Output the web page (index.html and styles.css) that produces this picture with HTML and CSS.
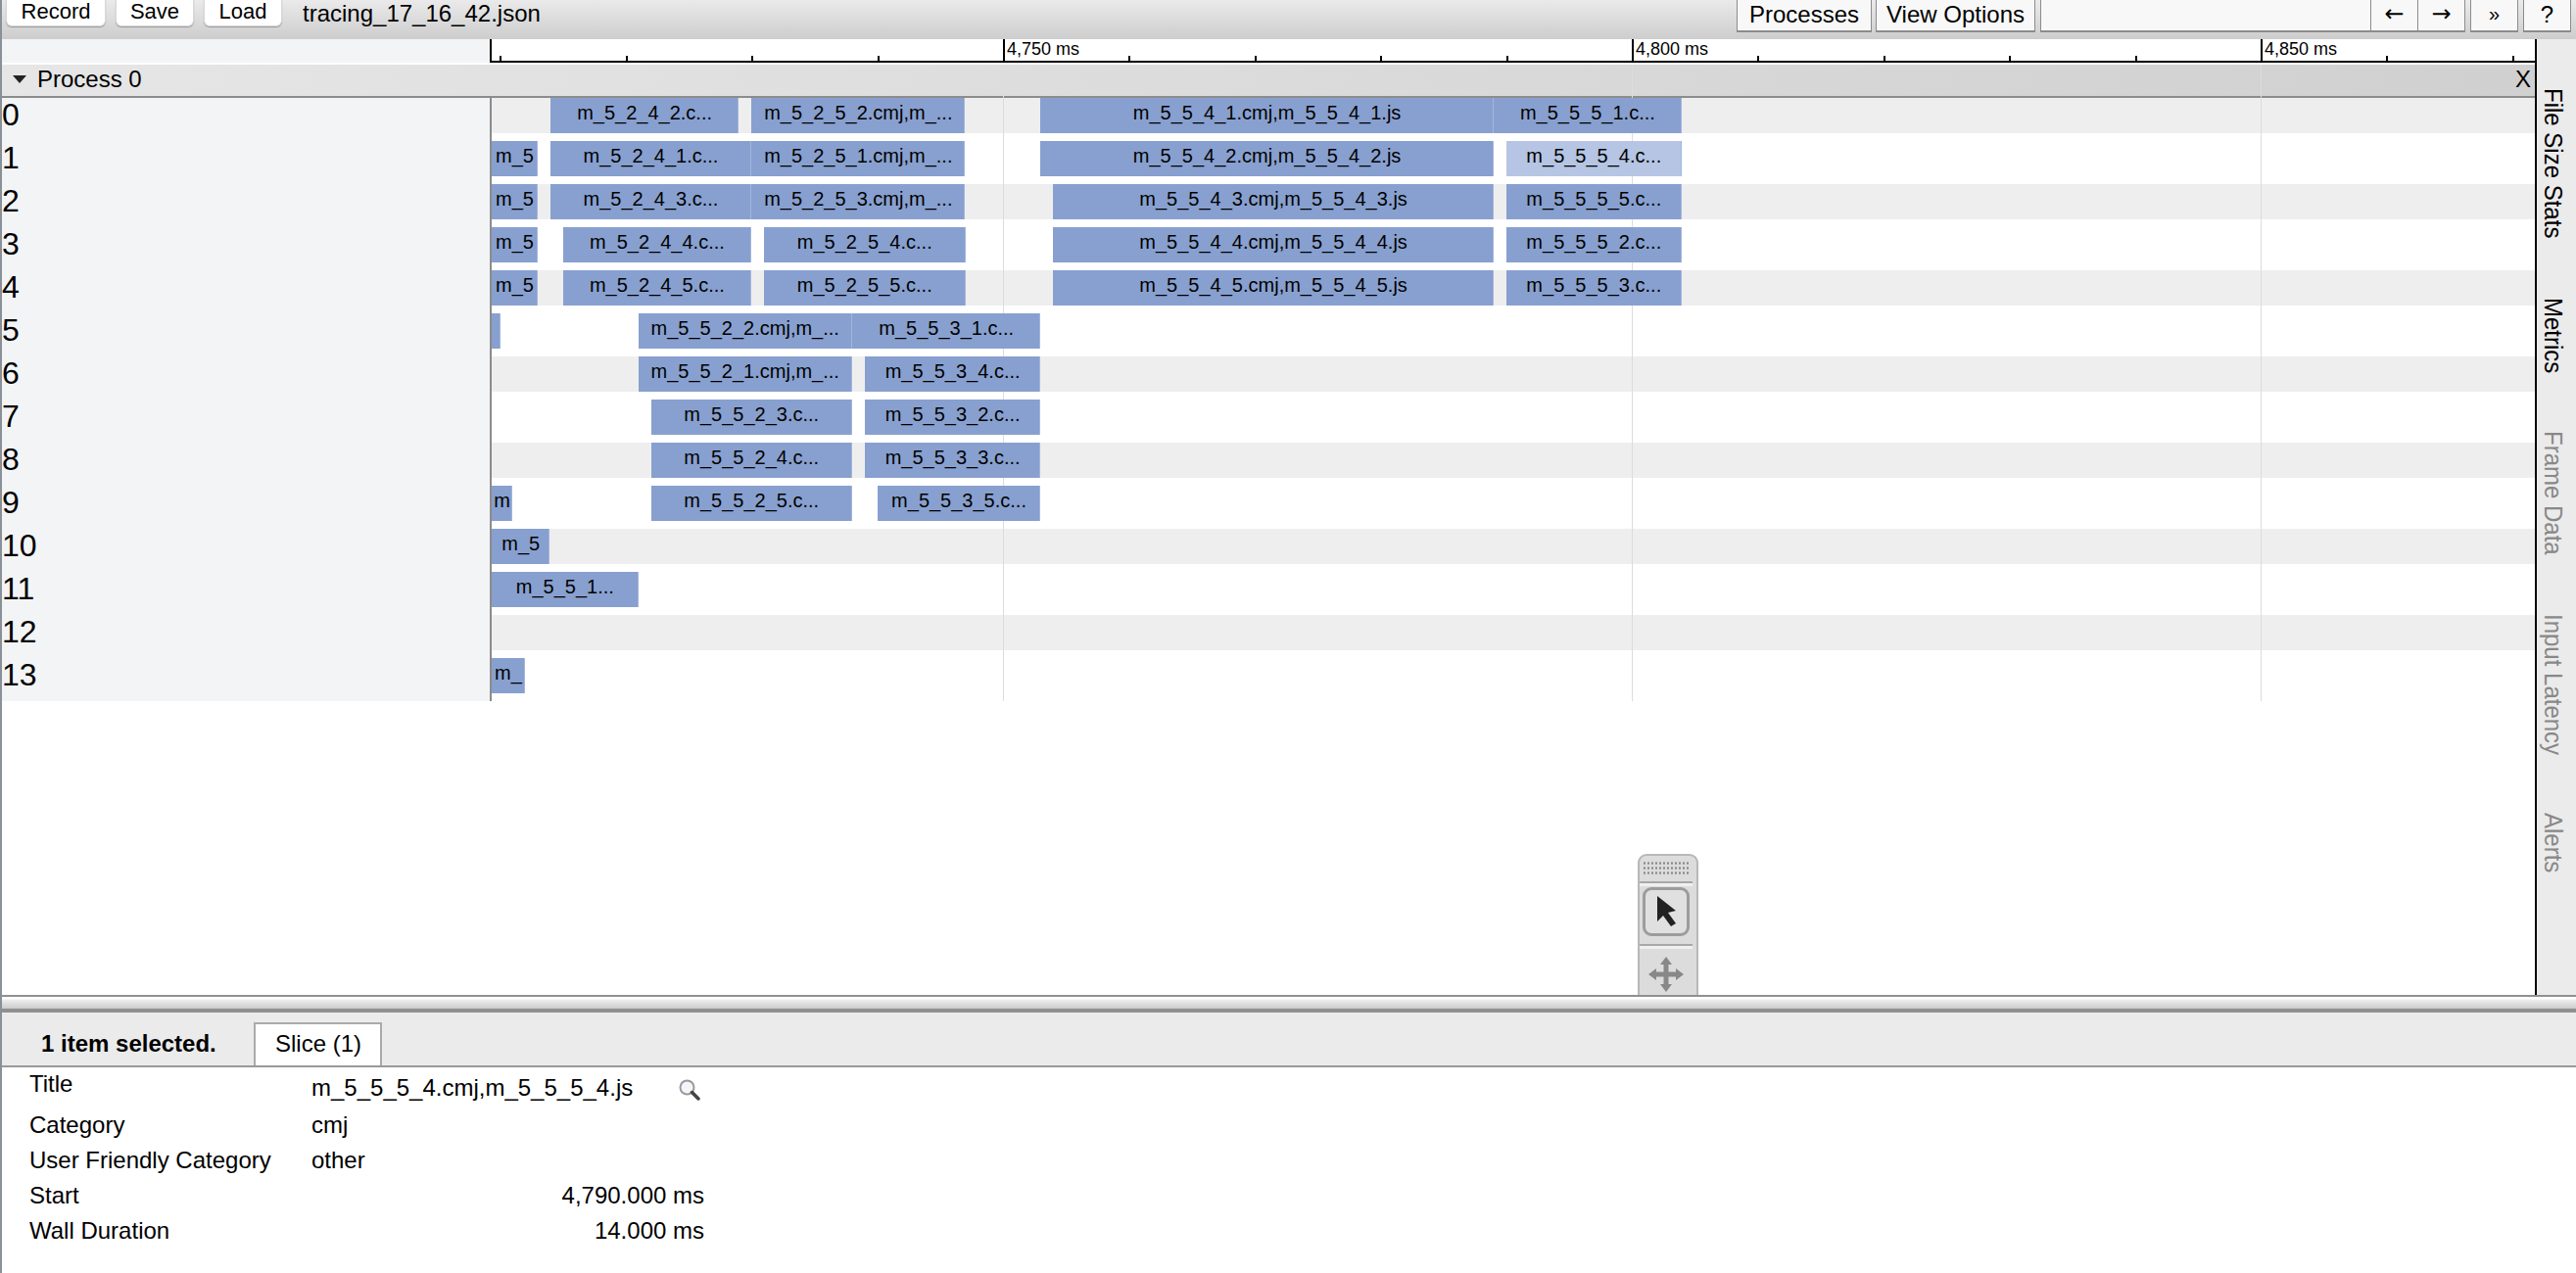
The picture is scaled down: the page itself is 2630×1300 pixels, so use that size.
FILE: index.html
```html
<!DOCTYPE html>
<html lang="en">
<head>
<meta charset="utf-8">
<title>tracing_17_16_42.json</title>
<link rel="stylesheet" href="styles.css">
</head>
<body>
<div class="app">
  <header class="toolbar">
    <button class="btn">Record</button>
    <button class="btn">Save</button>
    <button class="btn">Load</button>
    <span class="filename">tracing_17_16_42.json</span>
    <div class="toolbar-right">
      <span class="tool tool-processes">Processes</span>
      <span class="tool tool-view">View Options</span>
      <div class="search-group">
        <span class="search"></span>
        <span class="tool arrow">←</span>
        <span class="tool arrow">→</span>
      </div>
      <span class="tool arrow small">»</span>
      <span class="tool arrow">?</span>
    </div>
  </header>
  <main class="main">
    <section class="view">
      <div class="ruler">
        <div class="ruler-left"></div>
        <div class="ruler-track">
          <i class="tick" style="left:8.4px"></i>
          <i class="tick" style="left:136.8px"></i>
          <i class="tick" style="left:265.2px"></i>
          <i class="tick" style="left:393.6px"></i>
          <i class="tick major" style="left:522px"><b>4,750 ms</b></i>
          <i class="tick" style="left:650.4px"></i>
          <i class="tick" style="left:778.8px"></i>
          <i class="tick" style="left:907.2px"></i>
          <i class="tick" style="left:1035.6px"></i>
          <i class="tick major" style="left:1164px"><b>4,800 ms</b></i>
          <i class="tick" style="left:1292.4px"></i>
          <i class="tick" style="left:1420.8px"></i>
          <i class="tick" style="left:1549.2px"></i>
          <i class="tick" style="left:1677.6px"></i>
          <i class="tick major" style="left:1806px"><b>4,850 ms</b></i>
          <i class="tick" style="left:1934.4px"></i>
          <i class="tick" style="left:2062.8px"></i>
        </div>
      </div>
      <div class="process">
        <i class="gridline" style="left:1022px"></i>
        <i class="gridline" style="left:1664px"></i>
        <i class="gridline" style="left:2306px"></i>
        <div class="process-head">
          <svg class="caret" viewBox="0 0 14 8" width="14" height="8"><path d="M0 0H14L7 8Z" fill="#222"/></svg>
          <span>Process 0</span>
          <span class="close">X</span>
        </div>
        <div class="row"><div class="label">0</div><div class="lane">
          <div class="bar" style="left:59.8px;width:192.6px">m_5_2_4_2.c...</div>
          <div class="bar" style="left:265.2px;width:218.3px">m_5_2_5_2.cmj,m_...</div>
          <div class="bar" style="left:560.4px;width:462.4px">m_5_5_4_1.cmj,m_5_5_4_1.js</div>
          <div class="bar" style="left:1022.8px;width:192.2px">m_5_5_5_1.c...</div>
        </div></div>
        <div class="row"><div class="label">1</div><div class="lane">
          <div class="bar" style="left:0;width:47px">m_5</div>
          <div class="bar" style="left:59.8px;width:205.4px">m_5_2_4_1.c...</div>
          <div class="bar" style="left:265.2px;width:218.3px">m_5_2_5_1.cmj,m_...</div>
          <div class="bar" style="left:560.4px;width:462.4px">m_5_5_4_2.cmj,m_5_5_4_2.js</div>
          <div class="bar selected" style="left:1035.6px;width:179.4px">m_5_5_5_4.c...</div>
        </div></div>
        <div class="row"><div class="label">2</div><div class="lane">
          <div class="bar" style="left:0;width:47px">m_5</div>
          <div class="bar" style="left:59.8px;width:205.4px">m_5_2_4_3.c...</div>
          <div class="bar" style="left:265.2px;width:218.3px">m_5_2_5_3.cmj,m_...</div>
          <div class="bar" style="left:573.4px;width:449.4px">m_5_5_4_3.cmj,m_5_5_4_3.js</div>
          <div class="bar" style="left:1035.6px;width:179.4px">m_5_5_5_5.c...</div>
        </div></div>
        <div class="row"><div class="label">3</div><div class="lane">
          <div class="bar" style="left:0;width:47px">m_5</div>
          <div class="bar" style="left:72.6px;width:192.6px">m_5_2_4_4.c...</div>
          <div class="bar" style="left:278px;width:205.5px">m_5_2_5_4.c...</div>
          <div class="bar" style="left:573.4px;width:449.4px">m_5_5_4_4.cmj,m_5_5_4_4.js</div>
          <div class="bar" style="left:1035.6px;width:179.4px">m_5_5_5_2.c...</div>
        </div></div>
        <div class="row"><div class="label">4</div><div class="lane">
          <div class="bar" style="left:0;width:47px">m_5</div>
          <div class="bar" style="left:72.6px;width:192.6px">m_5_2_4_5.c...</div>
          <div class="bar" style="left:278px;width:205.5px">m_5_2_5_5.c...</div>
          <div class="bar" style="left:573.4px;width:449.4px">m_5_5_4_5.cmj,m_5_5_4_5.js</div>
          <div class="bar" style="left:1035.6px;width:179.4px">m_5_5_5_3.c...</div>
        </div></div>
        <div class="row"><div class="label">5</div><div class="lane">
          <div class="bar" style="left:0;width:8.5px"></div>
          <div class="bar" style="left:149.6px;width:218.3px">m_5_5_2_2.cmj,m_...</div>
          <div class="bar" style="left:367.9px;width:192.6px">m_5_5_3_1.c...</div>
        </div></div>
        <div class="row"><div class="label">6</div><div class="lane">
          <div class="bar" style="left:149.6px;width:218.3px">m_5_5_2_1.cmj,m_...</div>
          <div class="bar" style="left:380.8px;width:179.7px">m_5_5_3_4.c...</div>
        </div></div>
        <div class="row"><div class="label">7</div><div class="lane">
          <div class="bar" style="left:162.5px;width:205.4px">m_5_5_2_3.c...</div>
          <div class="bar" style="left:380.8px;width:179.7px">m_5_5_3_2.c...</div>
        </div></div>
        <div class="row"><div class="label">8</div><div class="lane">
          <div class="bar" style="left:162.5px;width:205.4px">m_5_5_2_4.c...</div>
          <div class="bar" style="left:380.8px;width:179.7px">m_5_5_3_3.c...</div>
        </div></div>
        <div class="row"><div class="label">9</div><div class="lane">
          <div class="bar" style="left:0;width:21px">m</div>
          <div class="bar" style="left:162.5px;width:205.4px">m_5_5_2_5.c...</div>
          <div class="bar" style="left:393.6px;width:166.9px">m_5_5_3_5.c...</div>
        </div></div>
        <div class="row"><div class="label">10</div><div class="lane">
          <div class="bar" style="left:0;width:59.4px">m_5</div>
        </div></div>
        <div class="row"><div class="label">11</div><div class="lane">
          <div class="bar" style="left:0;width:149.6px">m_5_5_1...</div>
        </div></div>
        <div class="row"><div class="label">12</div><div class="lane"></div></div>
        <div class="row"><div class="label">13</div><div class="lane">
          <div class="bar" style="left:0;width:34px">m_</div>
        </div></div>
      </div>
      <div class="toolkit">
        <div class="grip"></div>
        <div class="divider"></div>
        <div class="kit-btn active">
          <svg viewBox="0 0 20 32" width="20" height="32"><path d="M0 0V26L6 20L14 31L19 28L11 17L19 15Z" fill="#222"/></svg>
        </div>
        <div class="divider"></div>
        <div class="kit-move">
          <svg viewBox="0 0 36 36" width="36" height="36"><path d="M18 0L24 8H20.5V15.5H28V12L36 18L28 24V20.5H20.5V28H24L18 36L12 28H15.5V20.5H8V24L0 18L8 12V15.5H15.5V8H12Z" fill="#888"/></svg>
        </div>
      </div>
    </section>
    <aside class="sidebar">
      <span class="side-tab">File Size Stats</span>
      <span class="side-tab tab-metrics">Metrics</span>
      <span class="side-tab off tab-frame">Frame Data</span>
      <span class="side-tab off tab-input">Input Latency</span>
      <span class="side-tab off tab-alerts">Alerts</span>
    </aside>
  </main>
  <div class="splitter"></div>
  <section class="analysis">
    <div class="tabs">
      <span class="summary">1 item selected.</span>
      <span class="tab">Slice (1)</span>
    </div>
    <div class="details">
      <div class="key key-title">Title</div>
      <div class="val val-title">
        <span>m_5_5_5_4.cmj,m_5_5_5_4.js</span>
        <svg class="lens" viewBox="0 0 22 22" width="22" height="22"><circle cx="8.5" cy="8.5" r="7" fill="#f2f6fa" stroke="#9a9a9a" stroke-width="2"/><path d="M13.5 13.5L20 20" stroke="#444" stroke-width="3.5" stroke-linecap="round"/></svg>
      </div>
      <div class="key">Category</div><div class="val">cmj</div>
      <div class="key">User Friendly Category</div><div class="val">other</div>
      <div class="key">Start</div><div class="val num">4,790.000 ms</div>
      <div class="key">Wall Duration</div><div class="val num">14.000 ms</div>
    </div>
  </section>
</div>
</body>
</html>
```

FILE: styles.css
```css
* { box-sizing: border-box; }
html, body { margin: 0; padding: 0; background: #fff; }
body { width: 2630px; height: 1300px; overflow: hidden; font-family: "Liberation Sans", Arial, sans-serif; color: #000; }
.app { display: flex; flex-direction: column; height: 1300px; border-left: 2px solid #8a9098; }

.toolbar { height: 40px; flex: none; display: flex; align-items: flex-start; padding-left: 4px; background: linear-gradient(#eaeaea, #cdcdcd); }
.btn { width: 102px; height: 27px; margin: 0 10px 0 0; padding: 0 0 2px; border: 1px solid #d8d8d8; border-top: 0; border-radius: 0 0 6px 6px; background: #fff; box-shadow: 0 1px 1px #999; font: 22px/24px "Liberation Sans", Arial, sans-serif; color: #000; }
.btn + .btn { width: 80px; }
.filename { margin-left: 11px; font-size: 24px; line-height: 28px; }
.toolbar-right { margin-left: auto; margin-right: 5px; display: flex; gap: 5px; }
.tool { display: block; height: 33px; background: #f8f8f8; border: 1px solid #8c8c8c; border-top: 0; border-bottom-width: 2px; font-size: 24px; line-height: 29px; white-space: nowrap; text-align: center; }
.tool-processes { width: 138px; margin-right: -1px; }
.tool-view { width: 163px; }
.search-group { display: flex; }
.search { display: block; width: 338px; height: 33px; background: #f8f8f8; border: 1px solid #8c8c8c; border-top: 0; border-bottom-width: 2px; }
.arrow { width: 49px; }
.arrow.small { font-size: 20px; }
.search-group .arrow { width: 48px; margin-left: 0; border-left: 0; font-family: "DejaVu Sans", sans-serif; font-size: 24px; }

.main { flex: 1; min-height: 0; display: flex; }
.view { position: relative; flex: 1; min-width: 0; display: flex; flex-direction: column; }
.sidebar { flex: none; width: 42px; border-left: 2px solid #000; background: #ebebeb; display: flex; flex-direction: column; align-items: center; padding: 50px 7px 0 0; }
.side-tab { writing-mode: vertical-rl; font-size: 24px; white-space: nowrap; line-height: 28px; transform: scaleX(1.1); }
.side-tab.off { color: #888; }
.tab-metrics { margin-top: 61px; }
.tab-frame { margin-top: 58px; }
.tab-input { margin-top: 61px; }
.tab-alerts { margin-top: 58px; }

.ruler { height: 24px; flex: none; display: flex; }
.ruler-left { width: 498px; background: #f3f4f6; }
.ruler-track { position: relative; flex: 1; border-left: 2px solid #000; border-bottom: 2px solid #000; }
.tick { position: absolute; bottom: 0; width: 2px; height: 5px; background: #000; }
.tick.major { height: 22px; }
.tick b { position: absolute; left: 4px; top: 0; font: 18px/21px "Liberation Sans", Arial, sans-serif; white-space: nowrap; }

.process { position: relative; margin-top: 2px; flex: none; }
.gridline { position: absolute; top: 0; bottom: 0; width: 1px; background: #dcdcdc; z-index: 1; }
.process-head { height: 34px; display: flex; align-items: center; padding: 0 4px 2px 11px; background: linear-gradient(to right, #e6e6e6, #d0d0d0); border-bottom: 2px solid #8c8c8c; font-size: 24px; line-height: 32px; }
.process-head .caret { margin-right: 11px; }
.process-head .close { margin-left: auto; position: relative; z-index: 2; }

.row { display: flex; height: 44px; }
.label { width: 500px; flex: none; background: #f3f4f6; border-right: 2px solid #8c8c8c; font-size: 32px; line-height: 34px; }
.lane { position: relative; flex: 1; height: 36px; }
.row:nth-of-type(even) .lane { background: #eeeeee; }
.bar { position: absolute; top: 0; height: 36px; overflow: hidden; text-align: center; white-space: nowrap; background: #88a0cf; box-shadow: inset -1px 0 0 #a3b5dc; font-size: 20px; line-height: 30px; z-index: 2; }
.bar.selected { background: #b5c5e3; }

.toolkit { position: absolute; left: 1670px; top: 832px; width: 62px; height: 144px; padding-right: 4px; border: 2px solid #b8b8b8; border-bottom: 0; border-radius: 9px 9px 0 0; background: #dcdcdc; display: flex; flex-direction: column; align-items: center; z-index: 3; }
.grip { width: 48px; height: 15px; margin-top: 5px; background: radial-gradient(circle, #888 1px, transparent 1.3px) 0 0 / 4px 5px; flex: none; }
.divider { width: 54px; height: 5px; margin-top: 6px; flex: none; border-top: 2px solid #a8a8a8; border-bottom: 3px solid #f0f0f0; }
.kit-btn { width: 48px; height: 50px; margin-top: 1px; flex: none; display: flex; align-items: center; justify-content: center; border: 3px solid #9c9c9c; border-radius: 9px; background: #e0e0e0; }
.kit-btn + .divider { margin-top: 8px; }
.kit-btn svg { margin-left: 2px; }
.kit-move { margin-top: 8px; flex: none; line-height: 0; }

.splitter { flex: none; height: 18px; border-top: 2px solid #909090; border-bottom: 4px solid #909090; background: linear-gradient(#fff 0, #fff 2px, #eee 3px, #cbcbcb 100%); }

.analysis { flex: none; height: 266px; }
.tabs { height: 56px; display: flex; align-items: flex-end; padding-left: 40px; background: #ebebeb; border-bottom: 2px solid #999; }
.summary { width: 217px; font-weight: bold; font-size: 24px; line-height: 44px; }
.tab { width: 131px; height: 44px; padding-left: 20px; background: #fff; border: 2px solid #aaa; border-bottom: 0; font-size: 24px; line-height: 40px; }
.details { display: grid; grid-template-columns: 288px 401px; grid-auto-rows: 36px; grid-template-rows: 41px; padding-left: 28px; font-size: 24px; line-height: 36px; }
.key-title { line-height: 34px; }
.val-title { padding-top: 3px; position: relative; }
.num { text-align: right; }
.lens { position: absolute; left: 375px; top: 12px; }
```
